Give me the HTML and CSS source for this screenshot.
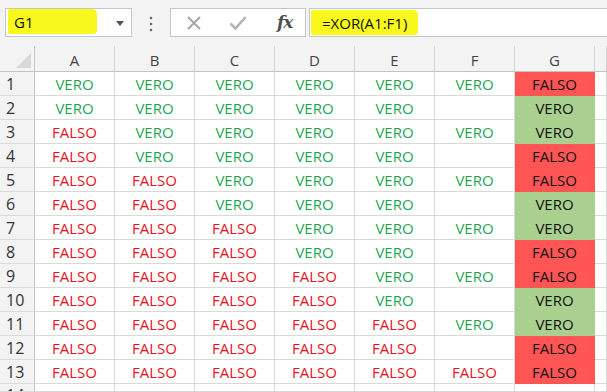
FILE: index.html
```html
<!DOCTYPE html>
<html lang="it">
<head>
    <meta charset="UTF-8">
    <title>XOR</title>
    <link rel="stylesheet" href="styles.css">
</head>
<body>
    <div class="toolbar">
        <div class="name-box">
            <span class="mark name-mark">G1</span>
            <svg class="caret" width="8" height="5" viewBox="0 0 8 5"><path d="M0 0H8L4 5Z" fill="#555"/></svg>
        </div>
        <svg class="dots" width="4" height="16" viewBox="0 0 4 16">
            <circle cx="2" cy="2" r="1.3" fill="#666"/>
            <circle cx="2" cy="8" r="1.3" fill="#666"/>
            <circle cx="2" cy="14" r="1.3" fill="#666"/>
        </svg>
        <div class="fx-box">
            <svg class="icon" width="16" height="16" viewBox="0 0 16 16"><path d="M2 2L14 14M14 2L2 14" stroke="#a6a6a6" stroke-width="2"/></svg>
            <svg class="icon" width="18" height="16" viewBox="0 0 18 16"><path d="M1.5 8.5L6.5 13.5L16.5 2" stroke="#b4b4b4" stroke-width="2.6" fill="none"/></svg>
            <span class="fx">fx</span>
        </div>
        <div class="formula">
            <span class="mark formula-mark">=XOR(A1:F1)</span>
        </div>
    </div>

    <div class="sheet">
        <div class="corner"><span class="tri"></span></div>
        <div class="col-head">A</div><div class="col-head">B</div><div class="col-head">C</div><div class="col-head">D</div>
        <div class="col-head">E</div><div class="col-head">F</div><div class="col-head">G</div><div class="col-head"></div>

        <div class="row-head">1</div>
        <div class="cell v">VERO</div><div class="cell v">VERO</div><div class="cell v">VERO</div><div class="cell v">VERO</div><div class="cell v">VERO</div><div class="cell v">VERO</div>
        <div class="cell res-false">FALSO</div><div class="cell"></div>

        <div class="row-head">2</div>
        <div class="cell v">VERO</div><div class="cell v">VERO</div><div class="cell v">VERO</div><div class="cell v">VERO</div><div class="cell v">VERO</div><div class="cell"></div>
        <div class="cell res-true">VERO</div><div class="cell"></div>

        <div class="row-head">3</div>
        <div class="cell f">FALSO</div><div class="cell v">VERO</div><div class="cell v">VERO</div><div class="cell v">VERO</div><div class="cell v">VERO</div><div class="cell v">VERO</div>
        <div class="cell res-true">VERO</div><div class="cell"></div>

        <div class="row-head">4</div>
        <div class="cell f">FALSO</div><div class="cell v">VERO</div><div class="cell v">VERO</div><div class="cell v">VERO</div><div class="cell v">VERO</div><div class="cell"></div>
        <div class="cell res-false">FALSO</div><div class="cell"></div>

        <div class="row-head">5</div>
        <div class="cell f">FALSO</div><div class="cell f">FALSO</div><div class="cell v">VERO</div><div class="cell v">VERO</div><div class="cell v">VERO</div><div class="cell v">VERO</div>
        <div class="cell res-false">FALSO</div><div class="cell"></div>

        <div class="row-head">6</div>
        <div class="cell f">FALSO</div><div class="cell f">FALSO</div><div class="cell v">VERO</div><div class="cell v">VERO</div><div class="cell v">VERO</div><div class="cell"></div>
        <div class="cell res-true">VERO</div><div class="cell"></div>

        <div class="row-head">7</div>
        <div class="cell f">FALSO</div><div class="cell f">FALSO</div><div class="cell f">FALSO</div><div class="cell v">VERO</div><div class="cell v">VERO</div><div class="cell v">VERO</div>
        <div class="cell res-true">VERO</div><div class="cell"></div>

        <div class="row-head">8</div>
        <div class="cell f">FALSO</div><div class="cell f">FALSO</div><div class="cell f">FALSO</div><div class="cell v">VERO</div><div class="cell v">VERO</div><div class="cell"></div>
        <div class="cell res-false">FALSO</div><div class="cell"></div>

        <div class="row-head">9</div>
        <div class="cell f">FALSO</div><div class="cell f">FALSO</div><div class="cell f">FALSO</div><div class="cell f">FALSO</div><div class="cell v">VERO</div><div class="cell v">VERO</div>
        <div class="cell res-false">FALSO</div><div class="cell"></div>

        <div class="row-head">10</div>
        <div class="cell f">FALSO</div><div class="cell f">FALSO</div><div class="cell f">FALSO</div><div class="cell f">FALSO</div><div class="cell v">VERO</div><div class="cell"></div>
        <div class="cell res-true">VERO</div><div class="cell"></div>

        <div class="row-head">11</div>
        <div class="cell f">FALSO</div><div class="cell f">FALSO</div><div class="cell f">FALSO</div><div class="cell f">FALSO</div><div class="cell f">FALSO</div><div class="cell v">VERO</div>
        <div class="cell res-true">VERO</div><div class="cell"></div>

        <div class="row-head">12</div>
        <div class="cell f">FALSO</div><div class="cell f">FALSO</div><div class="cell f">FALSO</div><div class="cell f">FALSO</div><div class="cell f">FALSO</div><div class="cell"></div>
        <div class="cell res-false">FALSO</div><div class="cell"></div>

        <div class="row-head">13</div>
        <div class="cell f">FALSO</div><div class="cell f">FALSO</div><div class="cell f">FALSO</div><div class="cell f">FALSO</div><div class="cell f">FALSO</div><div class="cell f">FALSO</div>
        <div class="cell res-false">FALSO</div><div class="cell"></div>

        <div class="row-head row-cut">14</div>
        <div class="cell"></div><div class="cell"></div><div class="cell"></div><div class="cell"></div><div class="cell"></div><div class="cell"></div>
        <div class="cell"></div><div class="cell"></div>
    </div>
</body>
</html>
```
FILE: styles.css
```css
body {
    margin: 0;
    padding: 0;
    background: #fff;
    font-family: "Open Sans", "Liberation Sans", sans-serif;
    overflow: hidden;
}

.toolbar {
    height: 46px;
    background: #f3f3f3;
    display: flex;
    align-items: flex-start;
    padding: 8px 0 0 5px;
    box-sizing: border-box;
}

.name-box {
    width: 127px;
    height: 29px;
    box-sizing: border-box;
    background: #fff;
    border: 1px solid #c6c6c6;
    display: flex;
    align-items: center;
    justify-content: space-between;
    padding: 0 7px 0 2px;
}

.mark {
    background: #f8f81c;
    border-radius: 2px 5px 4px 2px;
    font-size: 15px;
    color: #111;
    display: flex;
    align-items: center;
}

.name-mark {
    width: 89px;
    height: 25px;
    margin-top: -2px;
    padding-left: 6px;
    box-sizing: border-box;
}

.caret {
    margin-top: 1px;
}

.dots {
    margin: 8px 17px 0 17px;
}

.fx-box {
    width: 136px;
    height: 29px;
    box-sizing: border-box;
    background: #fff;
    border: 1px solid #c6c6c6;
    display: flex;
    align-items: center;
    padding: 0 0 0 15px;
}

.fx-box .icon:first-child {
    margin-right: 27px;
}

.fx-box .icon + .icon {
    margin-right: 30px;
}

.fx {
    font-family: "DejaVu Serif", "Liberation Serif", serif;
    font-style: italic;
    font-weight: bold;
    font-size: 17px;
    color: #505050;
    letter-spacing: -1px;
    margin-top: -2px;
}

.formula {
    flex: 1;
    height: 29px;
    margin-left: 3px;
    box-sizing: border-box;
    background: #fff;
    border: 1px solid #c6c6c6;
    border-right: none;
    display: flex;
    align-items: center;
    padding-left: 1px;
}

.formula-mark {
    width: 107px;
    height: 25px;
    padding-left: 11px;
    box-sizing: border-box;
}

.sheet {
    display: grid;
    grid-template-columns: 35px repeat(7, 80px) 12px;
    grid-template-rows: 26px repeat(13, 24px) 8px;
    overflow: hidden;
}

.corner,
.col-head,
.row-head {
    background: #f3f3f3;
    color: #444;
    border-right: 1px solid #d2d2d2;
    border-bottom: 1px solid #c4c4c4;
    box-sizing: border-box;
}

.corner {
    position: relative;
    border-right-color: #c4c4c4;
}

.tri {
    position: absolute;
    right: 3px;
    bottom: 3px;
    width: 0;
    height: 0;
    border-left: 15px solid transparent;
    border-bottom: 15px solid #d8d8d8;
}

.col-head {
    display: flex;
    align-items: center;
    justify-content: center;
    font-size: 15px;
    padding-top: 2px;
}

.row-head {
    display: flex;
    align-items: center;
    padding-left: 6px;
    font-size: 16px;
    color: #333;
    border-right-color: #c4c4c4;
    border-bottom-color: #dadada;
    overflow: hidden;
}

.row-head.row-cut {
    align-items: flex-start;
    line-height: 22px;
    padding-top: 0;
}

.cell {
    border-right: 1px solid #d9d9d9;
    border-bottom: 1px solid #d9d9d9;
    box-sizing: border-box;
    display: flex;
    align-items: center;
    justify-content: center;
    font-size: 15px;
}

.v {
    color: #1ea652;
}

.f {
    color: #e3141f;
}

.res-false {
    background: #ff5555;
    border-color: #ff5555;
    color: #111;
}

.res-true {
    background: #a9d08e;
    border-color: #a9d08e;
    color: #111;
}
```
